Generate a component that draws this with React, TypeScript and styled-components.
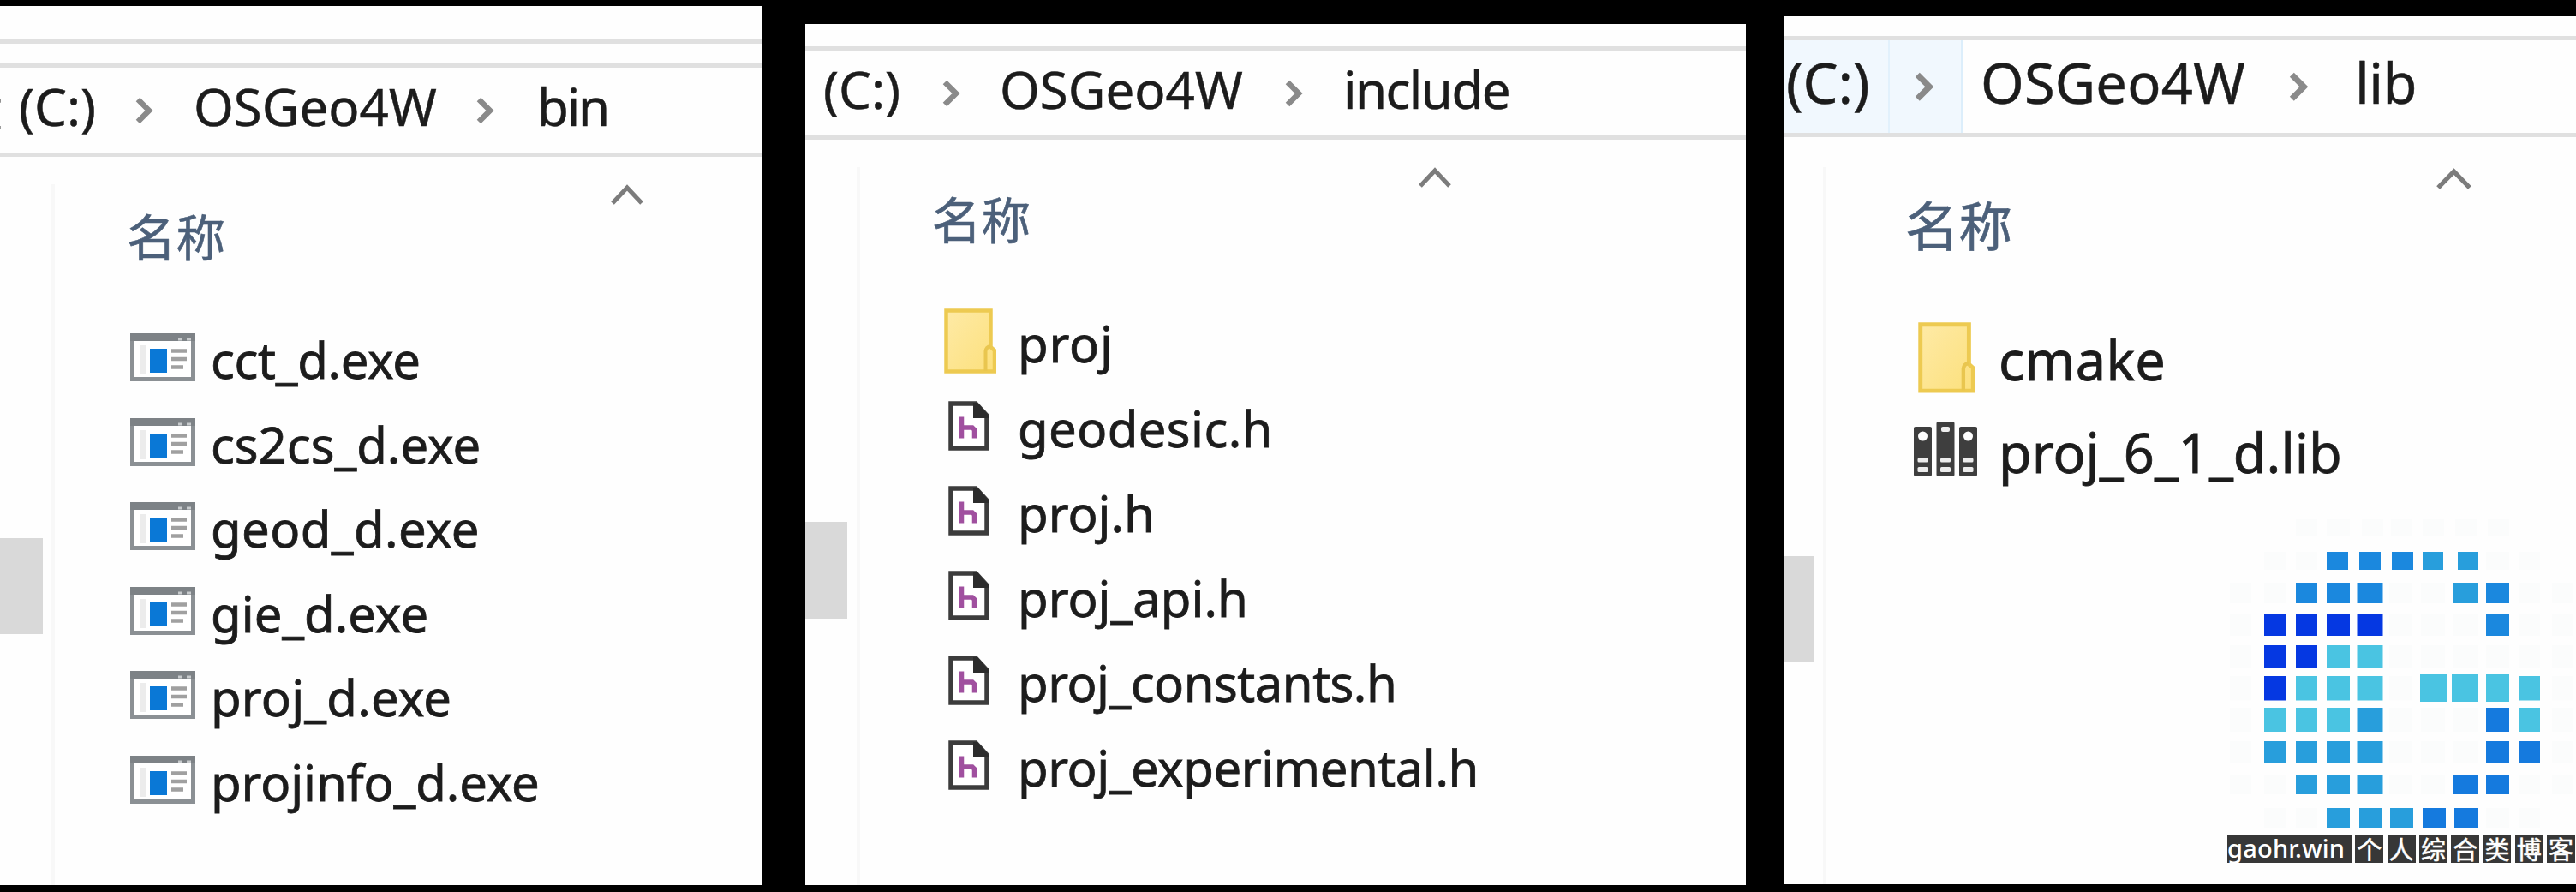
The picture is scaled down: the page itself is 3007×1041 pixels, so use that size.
import React from "react";
import styled, { createGlobalStyle } from "styled-components";

const Global = createGlobalStyle`
  *, *::before, *::after { box-sizing: border-box; }
  html, body { margin: 0; padding: 0; background: #000; }
  body { font-family: "Noto Sans", "Noto Sans CJK SC", sans-serif; color: #1c1c1c; }
  svg { display: block; }
`;

const Board = styled.main`
  display: flex;
  align-items: flex-start;
  width: 3007px;
  height: 1041px;
  overflow: hidden;
  background: #000;
`;

const Panel = styled.section<{ $w: number; $top: number; $left?: number; $bottom?: number }>`
  position: relative;
  flex: none;
  display: flex;
  flex-direction: column;
  width: ${(p) => p.$w}px;
  height: ${(p) => (p.$bottom ?? 1033) - p.$top}px;
  margin-top: ${(p) => p.$top}px;
  margin-left: ${(p) => p.$left ?? 0}px;
  background: #fefefe;
  overflow: hidden;
`;

const Rule = styled.div`
  flex: none;
  height: 5px;
  background: #e0e0e0;
`;

const Spacer = styled.div<{ $h: number }>`
  flex: none;
  height: ${(p) => p.$h}px;
`;

const AddressBar = styled.nav<{ $h: number }>`
  flex: none;
  display: flex;
  align-items: stretch;
  height: ${(p) => p.$h}px;
`;

const Crumb = styled.div<{ $w: number; $pad?: number; $size: number; $shift?: number; $hot?: boolean; $ls?: number }>`
  flex: none;
  width: ${(p) => p.$w}px;
  height: 100%;
  padding-left: ${(p) => p.$pad ?? 0}px;
  padding-top: ${(p) => p.$shift ?? 0}px;
  font-size: ${(p) => p.$size}px;
  line-height: 80px;
  letter-spacing: ${(p) => p.$ls ?? 0}px;
  -webkit-text-stroke: 0.5px #1c1c1c;
  white-space: nowrap;
  background: ${(p) => (p.$hot ? "#f1f8fe" : "transparent")};
  border-right: ${(p) => (p.$hot ? "2px solid #e2f1fc" : "0")};
`;

/* The drive label scrolled out past the left edge, leaving only its tail. */
const CutCrumb = styled.div`
  flex: none;
  display: flex;
  justify-content: flex-end;
  width: 5px;
  padding: 3px 2px 0 0;
  overflow: hidden;
  font-family: "Noto Sans CJK SC", sans-serif;
  font-size: 57px;
  line-height: 80px;
`;

const CrumbArrow = styled.div<{ $w: number; $pad: number; $top: number; $hot?: boolean }>`
  flex: none;
  width: ${(p) => p.$w}px;
  padding: ${(p) => p.$top}px 0 0 ${(p) => p.$pad}px;
  background: ${(p) => (p.$hot ? "#f1f8fe" : "transparent")};
  border-right: ${(p) => (p.$hot ? "2px solid #dceefb" : "0")};
`;

const Body = styled.div`
  flex: 1;
  display: flex;
  min-height: 0;
`;

const TreePane = styled.div<{ $w: number; $thumbTop: number }>`
  flex: none;
  width: ${(p) => p.$w}px;
  padding-top: ${(p) => p.$thumbTop}px;
`;

const TreeSelection = styled.div<{ $w: number; $h: number }>`
  width: ${(p) => p.$w}px;
  height: ${(p) => p.$h}px;
  background: #d9d9d9;
`;

const Splitter = styled.div<{ $top: number }>`
  flex: none;
  width: 4px;
  margin-top: ${(p) => p.$top}px;
  background: #f8f8f8;
`;

const ListPane = styled.div<{ $pad: number }>`
  flex: 1;
  min-width: 0;
  display: flex;
  flex-direction: column;
  padding-left: ${(p) => p.$pad}px;
`;

const SortRow = styled.div<{ $top: number; $left: number; $h: number }>`
  flex: none;
  height: ${(p) => p.$h}px;
  padding: ${(p) => p.$top}px 0 0 ${(p) => p.$left}px;
`;

const ColumnTitle = styled.div<{ $size: number; $h: number }>`
  flex: none;
  height: ${(p) => p.$h}px;
  line-height: ${(p) => p.$size}px;
  font-family: "Noto Sans CJK SC", sans-serif;
  font-size: ${(p) => p.$size}px;
  -webkit-text-stroke: 0.6px #4c607a;
  color: #4c607a;
  white-space: nowrap;
`;

const FileRow = styled.div<{ $h: number }>`
  flex: none;
  display: flex;
  height: ${(p) => p.$h}px;
`;

const IconCell = styled.div<{ $w: number; $top: number; $left: number }>`
  flex: none;
  width: ${(p) => p.$w}px;
  padding: ${(p) => p.$top}px 0 0 ${(p) => p.$left}px;
`;

const FileName = styled.span<{ $size: number; $h: number; $ls?: number }>`
  font-size: ${(p) => p.$size}px;
  line-height: ${(p) => p.$h}px;
  letter-spacing: ${(p) => p.$ls ?? 0}px;
  -webkit-text-stroke: 0.8px #1c1c1c;
  white-space: nowrap;
`;

const Chevron = ({ s = 1 }: { s?: number }) => (
  <svg width={22 * s} height={32 * s} viewBox="0 0 22 32">
    <path d="M4 3 L17 16 L4 29" fill="none" stroke="#8a8a8a" strokeWidth="6.500" />
  </svg>
);

const SortCaret = ({ w, h }: { w: number; h: number }) => (
  <svg width={w} height={h} viewBox="0 0 38 24" preserveAspectRatio="none">
    <path d="M2 22 L19 4 L36 22" fill="none" stroke="#7c7c7c" strokeWidth="5" />
  </svg>
);

const ExeIcon = () => (
  <svg width="76" height="56" viewBox="0 0 76 56">
    <rect x="2.5" y="2.5" width="71" height="51" fill="#fff" stroke="#8b9094" strokeWidth="5" />
    <rect x="0" y="0" width="76" height="9" fill="#7d8286" />
    <path d="M56 7h5M66 7h5" stroke="#c8cbcd" strokeWidth="3" />
    <rect x="11" y="14" width="7" height="34" fill="#ececec" />
    <rect x="23" y="18" width="20" height="28" fill="#0a78d6" />
    <path d="M48 20.500h18M48 30h18M48 39.500h14" stroke="#a0a0a0" strokeWidth="4.500" />
  </svg>
);

const HeaderIcon = () => (
  <svg width="48" height="58" viewBox="0 0 48 58">
    <path d="M3 3H32L45 17V55H3Z" fill="#fff" stroke="#3c3c3c" strokeWidth="5.500" />
    <path d="M29 2h5l13 15v3H29z" fill="#2c2c2c" />
    <path d="M15.500 18.500V43.500M15.500 31H28L30.500 33.500V43.500" fill="none" stroke="#a0509f" strokeWidth="5.500" />
  </svg>
);

const FolderIcon = ({ s = 1 }: { s?: number }) => (
  <svg width={61 * s} height={76 * s} viewBox="0 0 61 76">
    <defs>
      <linearGradient id="folderFace" x1="0" y1="0" x2="1" y2="1">
        <stop offset="0" stopColor="#feeaa6" />
        <stop offset="1" stopColor="#fce07c" />
      </linearGradient>
    </defs>
    <path d="M2.500 2.500H54.500V45L59 49V73.500H2.500Z" fill="url(#folderFace)" stroke="#edca51" strokeWidth="4.500" />
    <path d="M48.500 73V50Q49 45 54 44" fill="none" stroke="#e9c64f" strokeWidth="4" />
  </svg>
);

const LibIcon = () => (
  <svg width="76" height="65" viewBox="0 0 76 65">
    {[0, 26.5, 53].map((x, i) => {
      const y = i === 1 ? 0 : 6;
      return (
        <g key={x}>
          <rect x={x + 1} y={y} width="21" height={64 - y} rx="2" fill="#3e3e3e" />
          {i === 1 ? (
            <rect x={x + 6.5} y="6" width="10" height="6" rx="2" fill="#eee" />
          ) : (
            <circle cx={x + 11.5} cy="17" r="5.500" fill="#fff" />
          )}
          <rect x={x + 5.5} y="42.500" width="12" height="5" rx="1.500" fill="#ececec" />
          <rect x={x + 5.5} y="53" width="12" height="6" rx="1.500" fill="#ececec" />
        </g>
      );
    })}
  </svg>
);

/* Pixel-mosaic logo: columns and rows are [start, size]. */
type Span = [number, number];
const COLS: Span[] = [
  [3, 25], [43, 25], [80, 25], [116, 27], [151.5, 30], [189, 27], [226, 28], [264, 29], [302, 27], [340, 25], [379, 25],
];
const ROWS: Span[] = [
  [6, 20], [44, 21], [80, 24], [116, 26], [153, 27], [189, 28.5], [226, 28], [265, 26], [304, 23], [343, 23],
];
/* Cells in the outer rows that sit slightly off the column grid. */
const OFFGRID: Record<number, Record<number, Span>> = {
  0: { 4: [157, 25], 5: [191, 25], 6: [228, 25], 7: [266, 25], 8: [304, 25] },
  1: { 3: [116, 25], 4: [154, 25], 5: [192, 25], 6: [228, 24], 7: [269, 24] },
  5: { 6: [225, 32], 7: [262, 31] },
  9: { 4: [154, 26], 5: [190, 27], 6: [228, 27], 7: [265, 28] },
};
const TONES: Record<string, string> = {
  b: "#1b88de", c: "#289edc", d: "#0538e2", e: "#4ac4e2", f: "#157ade", ".": "#fbfcfc",
};
const MOSAIC = [
  "  ....... ",
  " ..bbbcc.. ",
  "..bbb..cb..",
  ".dddd...b..",
  ".ddee......",
  ".deee.eeee.",
  ".eeec...fe.",
  ".cccc...ff.",
  "..ccc..ff..",
  " ..cccff.. ",
];

const Logo = () => (
  <svg width="407" height="370" viewBox="0 0 407 370">
    {MOSAIC.map((line, r) =>
      line.split("").map((ch, c) => {
        if (ch === " ") return null;
        const [x, w] = OFFGRID[r]?.[c] ?? COLS[c];
        const [y, h] = r === 5 && c >= 6 && c <= 8 ? [187, 32] : ROWS[r];
        return <rect key={`${r}-${c}`} x={x} y={y} width={w} height={h} fill={TONES[ch]} />;
      }),
    )}
  </svg>
);

const Watermark = styled.div`
  position: absolute;
  left: 517px;
  top: 581px;
  width: 407px;
`;

const Caption = styled.div`
  display: flex;
  gap: 4.3px;
  height: 33px;
  margin-top: 4px;
  color: #fff;
`;

const Site = styled.span`
  flex: none;
  width: 145px;
  height: 33px;
  background: #373737;
  font-family: "Comic Sans MS", "Noto Sans", sans-serif;
  font-size: 29px;
  font-weight: 500;
  line-height: 31px;
  letter-spacing: 0.2px;
  white-space: nowrap;
`;

const Glyph = styled.span`
  flex: none;
  width: 33px;
  height: 33px;
  background: #373737;
  font-family: "Noto Sans CJK SC", sans-serif;
  font-size: 29px;
  -webkit-text-stroke: 0.5px #fff;
  line-height: 33px;
  text-align: center;
`;

type Entry = { name: string; ls?: number };

const BIN: Entry[] = [
  { name: "cct_d.exe", ls: -0.3 },
  { name: "cs2cs_d.exe" },
  { name: "geod_d.exe", ls: 0.4 },
  { name: "gie_d.exe" },
  { name: "proj_d.exe", ls: 0.2 },
  { name: "projinfo_d.exe", ls: -0.1 },
];
const INCLUDE: Entry[] = [
  { name: "proj", ls: 0.8 },
  { name: "geodesic.h", ls: 0.4 },
  { name: "proj.h" },
  { name: "proj_api.h" },
  { name: "proj_constants.h", ls: -0.5 },
  { name: "proj_experimental.h", ls: -0.45 },
];
const LIB: Entry[] = [{ name: "cmake", ls: 0.3 }, { name: "proj_6_1_d.lib" }];

export default function App() {
  return (
    <>
      <Global />
      <Board>
        <Panel $w={890} $top={7}>
          <Spacer $h={39} />
          <Rule />
          <Spacer $h={23} />
          <Rule />
          <AddressBar $h={99}>
            <CutCrumb>盘</CutCrumb>
            <Crumb $w={152} $pad={17} $size={60} $shift={5}>(C:)</Crumb>
            <CrumbArrow $w={67} $pad={0} $top={34}><Chevron /></CrumbArrow>
            <Crumb $w={331} $pad={2} $size={60} $shift={5}>OSGeo4W</Crumb>
            <CrumbArrow $w={69} $pad={0} $top={34}><Chevron /></CrumbArrow>
            <Crumb $w={200} $pad={3} $size={60} $shift={5} $ls={-2.2}>bin</Crumb>
          </AddressBar>
          <Rule />
          <Body>
            <TreePane $w={60} $thumbTop={445}><TreeSelection $w={50} $h={112} /></TreePane>
            <Splitter $top={32} />
            <ListPane $pad={84}>
              <SortRow $top={32} $left={565} $h={63}><SortCaret w={38} h={24} /></SortRow>
              <ColumnTitle $size={57.5} $h={125}>名称</ColumnTitle>
              {BIN.map(({ name, ls }) => (
                <FileRow $h={98.5} key={name}>
                  <IconCell $w={98} $top={18} $left={4}><ExeIcon /></IconCell>
                  <FileName $size={58} $h={97} $ls={ls}>{name}</FileName>
                </FileRow>
              ))}
            </ListPane>
          </Body>
        </Panel>

        <Panel $w={1098} $top={28} $left={50}>
          <Spacer $h={26} />
          <Rule />
          <AddressBar $h={99}>
            <Crumb $w={159} $pad={21} $size={60} $shift={5}>(C:)</Crumb>
            <CrumbArrow $w={66} $pad={0} $top={34}><Chevron /></CrumbArrow>
            <Crumb $w={334} $pad={2} $size={60} $shift={5}>OSGeo4W</Crumb>
            <CrumbArrow $w={67} $pad={0} $top={34}><Chevron /></CrumbArrow>
            <Crumb $w={300} $pad={2} $size={60} $shift={5} $ls={-1.5}>include</Crumb>
          </AddressBar>
          <Rule />
          <Body>
            <TreePane $w={60} $thumbTop={446}><TreeSelection $w={49} $h={113} /></TreePane>
            <Splitter $top={32} />
            <ListPane $pad={84}>
              <SortRow $top={32} $left={568} $h={63}><SortCaret w={38} h={24} /></SortRow>
              <ColumnTitle $size={57.5} $h={125}>名称</ColumnTitle>
              {INCLUDE.map(({ name, ls }, i) => (
                <FileRow $h={99.1} key={name}>
                  <IconCell $w={100} $top={i ? 18 : 9} $left={i ? 19 : 14}>{i ? <HeaderIcon /> : <FolderIcon />}</IconCell>
                  <FileName $size={58} $h={99} $ls={ls}>{name}</FileName>
                </FileRow>
              ))}
            </ListPane>
          </Body>
        </Panel>

        <Panel $w={924} $top={19} $left={45} $bottom={1032}>
          <Spacer $h={23} />
          <Rule />
          <AddressBar $h={108}>
            <Crumb $w={123} $pad={2} $size={65} $shift={9} $hot>(C:)</Crumb>
            <CrumbArrow $w={85} $pad={28} $top={37} $hot><Chevron s={1.08} /></CrumbArrow>
            <Crumb $w={380} $pad={21} $size={65} $shift={9} $ls={0.2}>OSGeo4W</Crumb>
            <CrumbArrow $w={75} $pad={0} $top={37}><Chevron s={1.08} /></CrumbArrow>
            <Crumb $w={200} $pad={3} $size={65} $shift={9} $ls={-0.5}>lib</Crumb>
          </AddressBar>
          <Rule />
          <Body>
            <TreePane $w={45} $thumbTop={489}><TreeSelection $w={34} $h={123} /></TreePane>
            <Splitter $top={35} />
            <ListPane $pad={92}>
              <SortRow $top={36} $left={620} $h={70}><SortCaret w={41} h={25} /></SortRow>
              <ColumnTitle $size={62.5} $h={136}>名称</ColumnTitle>
              {LIB.map(({ name, ls }, i) => (
                <FileRow $h={108} key={name}>
                  <IconCell $w={109} $top={i ? 18 : 10} $left={i ? 9 : 15}>{i ? <LibIcon /> : <FolderIcon s={1.09} />}</IconCell>
                  <FileName $size={63} $h={108} $ls={ls}>{name}</FileName>
                </FileRow>
              ))}
            </ListPane>
          </Body>
          <Watermark>
            <Logo />
            <Caption>
              <Site>gaohr.win</Site>
              {"个人综合类博客".split("").map((ch) => (
                <Glyph key={ch}>{ch}</Glyph>
              ))}
            </Caption>
          </Watermark>
        </Panel>
      </Board>
    </>
  );
}
